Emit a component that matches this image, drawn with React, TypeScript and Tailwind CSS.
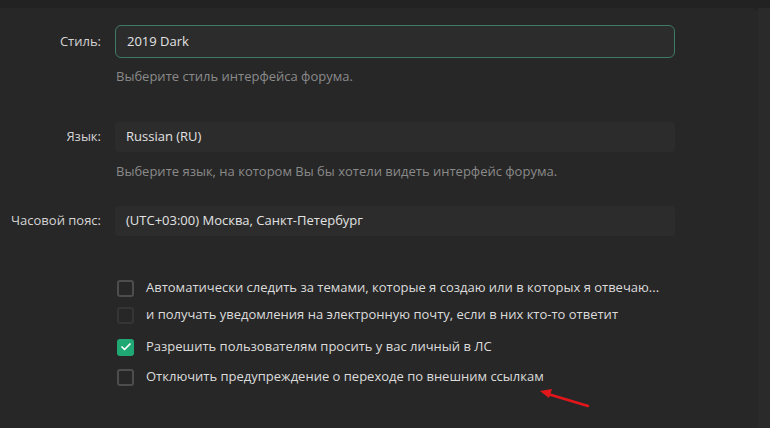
import { Check } from "lucide-react"

function Field({ label, value, focused, hint, className }: { label: string; value: string; focused?: boolean; hint?: string; className?: string }) {
  return (
    <div className={`grid grid-cols-[101px_560px] gap-x-[14px] ${className || ""}`}>
      <div className="flex items-center justify-end text-[13px] text-[#d4d4d4]">{label}</div>
      <div
        className={
          focused
            ? "flex h-[33px] items-center rounded-[6px] border border-[#3f7a63] bg-[#2c2c2c] pl-[11px] text-[13px] text-[#e2e2e2]"
            : "flex h-[30px] items-center rounded-[4px] bg-[#2c2c2c] pl-[11px] text-[13px] text-[#e2e2e2]"
        }
      >
        {value}
      </div>
      {hint && (
        <>
          <div />
          <div className={`${focused ? "mt-[10px]" : "mt-[11px]"} pl-[1px] text-[13px] leading-[16px] text-[#8a8a8a]`}>{hint}</div>
        </>
      )}
    </div>
  )
}

function Option({ label, checked, disabled, className }: { label: string; checked?: boolean; disabled?: boolean; className?: string }) {
  return (
    <div className={`flex h-[20px] items-center gap-[12px] pl-[117px] ${className || ""}`}>
      <span
        className={
          checked
            ? "flex h-[17px] w-[17px] items-center justify-center rounded-[3px] bg-[#1fa874]"
            : disabled
              ? "h-[17px] w-[17px] rounded-[3px] border-2 border-[#353535]"
              : "h-[17px] w-[17px] rounded-[3px] border-2 border-[#4d4d4d]"
        }
      >
        {checked && <Check size={12} strokeWidth={3.5} color="#ffffff" />}
      </span>
      <span className="text-[13px] text-[#dcdcdc]">{label}</span>
    </div>
  )
}

export default function App() {
  return (
    <div className="h-[428px] w-[770px] overflow-hidden bg-[#222222] pt-[8px] font-['Open_Sans',sans-serif]">
      <div className="flex h-full">
        <div className="relative h-full w-[758px] rounded-tr-[6px] bg-[#272727] pt-[17px]">
          <Field label="Стиль:" value="2019 Dark" focused hint="Выберите стиль интерфейса форума." />
          <Field
            className="mt-[38px]"
            label="Язык:"
            value="Russian (RU)"
            hint="Выберите язык, на котором Вы бы хотели видеть интерфейс форума."
          />
          <Field className="mt-[27px]" label="Часовой пояс:" value="(UTC+03:00) Москва, Санкт-Петербург" />

          <div className="mt-[42px]">
            <Option label="Автоматически следить за темами, которые я создаю или в которых я отвечаю..." />
            <Option className="mt-[7px]" disabled label="и получать уведомления на электронную почту, если в них кто-то ответит" />
            <Option className="mt-[12px]" checked label="Разрешить пользователям просить у вас личный в ЛС" />
            <Option className="mt-[10px]" label="Отключить предупреждение о переходе по внешним ссылкам" />
          </div>

          <svg className="absolute left-[536px] top-[378px]" width="56" height="24" viewBox="0 0 56 24">
            <line x1="52" y1="20" x2="12" y2="8" stroke="#e3161b" strokeWidth="2.5" strokeLinecap="round" />
            <polygon points="4,5 16,3 13,12" fill="#e3161b" />
          </svg>
        </div>
        <div className="h-full flex-1 bg-[#2a2a2a]" />
      </div>
    </div>
  )
}
